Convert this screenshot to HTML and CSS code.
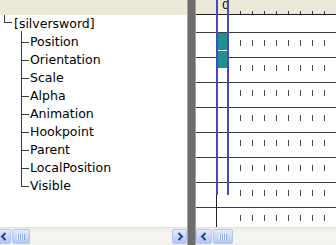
FILE: index.html
```html
<!DOCTYPE html>
<html>
<head>
<meta charset="utf-8">
<link rel="stylesheet" href="styles.css">
</head>
<body>
<div class="app">
  <div class="col col-left">
    <div class="pane tree-pane">
      <div class="tree-hdr"></div>
      <div class="root-row"><span class="root-conn"></span><span class="label">[silversword]</span></div>
      <div class="children">
        <div class="node">Position</div>
        <div class="node">Orientation</div>
        <div class="node">Scale</div>
        <div class="node">Alpha</div>
        <div class="node">Animation</div>
        <div class="node">Hookpoint</div>
        <div class="node">Parent</div>
        <div class="node">LocalPosition</div>
        <div class="node">Visible</div>
      </div>
    </div>
    <div class="hscroll">
      <div class="sbtn sbtn-cut"><svg width="8" height="9" viewBox="0 0 8 9"><polyline points="5.5,1 2,4.5 5.5,8" fill="none" stroke="#2d4180" stroke-width="2"/></svg></div>
      <div class="thumb thumb-left"><span class="grip"></span></div>
      <div class="track"></div>
      <div class="sbtn"><svg width="8" height="9" viewBox="0 0 8 9"><polyline points="2.5,1 6,4.5 2.5,8" fill="none" stroke="#2d4180" stroke-width="2"/></svg></div>
    </div>
  </div>
  <div class="splitter"></div>
  <div class="col col-right">
    <div class="pane tl-pane">
      <div class="tl-hdr"><span class="zero">0</span><span class="hticks"></span></div>
      <div class="tl-row"></div>
      <div class="tl-row"><span class="marks"></span></div>
      <div class="tl-row"><span class="marks"></span></div>
      <div class="tl-row"><span class="marks"></span></div>
      <div class="tl-row"><span class="marks"></span></div>
      <div class="tl-row"><span class="marks"></span></div>
      <div class="tl-row"><span class="marks"></span></div>
      <div class="tl-row"><span class="marks"></span></div>
      <div class="tl-row"><span class="marks"></span></div>
      <div class="tl-row"><span class="marks"></span></div>
      <div class="key key-1"></div>
      <div class="key key-2"></div>
      <div class="frame-line frame-line-a"></div>
      <div class="frame-line frame-line-b"></div>
      <div class="playhead-tail"></div>
    </div>
    <div class="hscroll">
      <div class="sbtn sbtn-wide"><svg width="8" height="9" viewBox="0 0 8 9"><polyline points="5.5,1 2,4.5 5.5,8" fill="none" stroke="#2d4180" stroke-width="2"/></svg></div>
      <div class="thumb thumb-right"><span class="grip"></span></div>
      <div class="track"></div>
    </div>
  </div>
</div>
</body>
</html>
```
FILE: styles.css
```css
html, body {
  margin: 0;
  padding: 0;
}
body {
  width: 336px;
  height: 245px;
  overflow: hidden;
  background: #fff;
  font-family: "DejaVu Sans", Verdana, sans-serif;
  font-size: 12.5px;
  color: #000;
}
.app {
  display: flex;
  height: 245px;
}
.col {
  display: flex;
  flex-direction: column;
}
.col-left {
  width: 187px;
}
.col-right {
  width: 140px;
}
.splitter {
  width: 9px;
  background: linear-gradient(to right, #a4a4a4 0 1px, #6d6d6d 1px 8px, #a0a0a0 8px 9px);
}
.pane {
  height: 227px;
  position: relative;
  overflow: hidden;
  background: #fff;
}

/* tree */
.tree-hdr {
  height: 15px;
  background: #ece9d8;
}
.root-row {
  display: flex;
  height: 18px;
  line-height: 18px;
}
.root-conn {
  width: 8px;
  height: 8px;
  margin-left: 4px;
  border-left: 1px solid #3c3c3c;
  border-bottom: 1px solid #3c3c3c;
  box-sizing: border-box;
}
.label {
  margin-left: 2px;
  white-space: nowrap;
}
.children {
  margin-left: 21px;
}
.node {
  position: relative;
  height: 18px;
  line-height: 18px;
  padding-left: 9px;
  white-space: nowrap;
}
.node::before {
  content: "";
  position: absolute;
  left: 0;
  top: 0;
  bottom: 0;
  width: 1px;
  background: #3c3c3c;
}
.node:first-child::before {
  top: -2px;
}
.node:last-child::before {
  bottom: 8px;
}
.node::after {
  content: "";
  position: absolute;
  left: 0;
  top: 9px;
  width: 8px;
  height: 1px;
  background: #3c3c3c;
}

/* timeline */
.tl-hdr {
  display: flex;
  height: 14px;
  background: #ece9d8;
  border-bottom: 1px solid #1e1e1e;
}
.zero {
  margin-left: 26px;
  width: 18px;
  font-size: 11px;
  line-height: 11px;
  height: 14px;
  overflow: hidden;
}
.hticks {
  flex: 1;
  align-self: flex-end;
  height: 3px;
  background: repeating-linear-gradient(to right, #333 0 1px, transparent 1px 12px);
}
.tl-row {
  height: 17px;
  border-bottom: 1px solid #3a3a3a;
}
.marks {
  display: block;
  margin-left: 44px;
  margin-top: 7px;
  height: 6px;
  background: repeating-linear-gradient(to right, #4a4a4a 0 1px, transparent 1px 12px);
}
.key {
  position: absolute;
  left: 22px;
  width: 9px;
  height: 17px;
  background: #1f9196;
}
.key-1 { top: 33px; }
.key-2 { top: 51px; }
.frame-line {
  position: absolute;
  top: 0;
  width: 2px;
  height: 195px;
  background: #4a48be;
}
.frame-line-a { left: 20px; }
.frame-line-b { left: 31px; }
.playhead-tail {
  position: absolute;
  left: 20px;
  top: 195px;
  width: 1px;
  height: 32px;
  background: #222;
}

/* scrollbars */
.hscroll {
  height: 18px;
  display: flex;
  align-items: center;
  background: linear-gradient(#eeede5, #f6f5f1 40%, #f3f2ec);
  border-top: 1px solid #e4e1d8;
  box-sizing: border-box;
  overflow: hidden;
}
.sbtn {
  width: 15px;
  height: 15px;
  flex: none;
  box-sizing: border-box;
  border: 1px solid #b4c6f0;
  border-radius: 2px;
  background: linear-gradient(#e2eafe, #c3d4fc 60%, #b2c7f7);
  display: flex;
  align-items: center;
  justify-content: center;
}
.sbtn-cut {
  margin-left: -4px;
}
.sbtn-wide {
  width: 16px;
}
.thumb {
  height: 15px;
  flex: none;
  margin-left: 1px;
  box-sizing: border-box;
  border: 1px solid #b4c6f0;
  border-radius: 2px;
  background: linear-gradient(#e2eafe, #c6d6fc 60%, #b5c9f8);
  display: flex;
  align-items: center;
  justify-content: center;
}
.thumb-left { width: 18px; }
.thumb-right { width: 20px; }
.grip {
  width: 8px;
  height: 6px;
  background: repeating-linear-gradient(to right, #eef3ff 0 1px, #8fa9e8 1px 2px);
}
.track {
  flex: 1;
  align-self: stretch;
}
```
